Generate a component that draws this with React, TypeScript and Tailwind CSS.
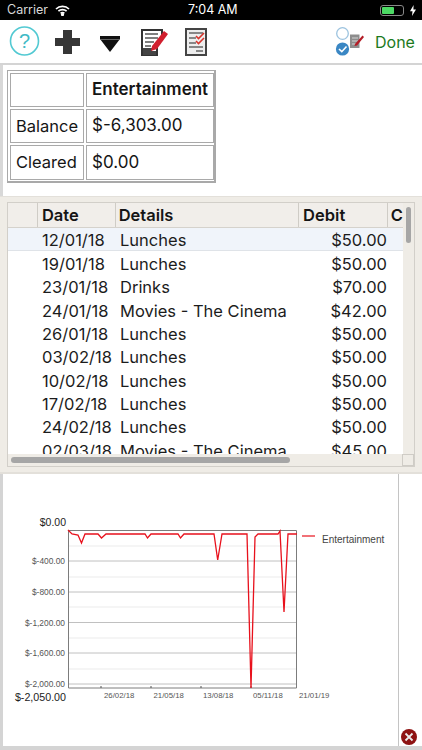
const rows = [
  ['12/01/18', 'Lunches', '$50.00'],
  ['19/01/18', 'Lunches', '$50.00'],
  ['23/01/18', 'Drinks', '$70.00'],
  ['24/01/18', 'Movies - The Cinema', '$42.00'],
  ['26/01/18', 'Lunches', '$50.00'],
  ['03/02/18', 'Lunches', '$50.00'],
  ['10/02/18', 'Lunches', '$50.00'],
  ['17/02/18', 'Lunches', '$50.00'],
  ['24/02/18', 'Lunches', '$50.00'],
  ['02/03/18', 'Movies - The Cinema', '$45.00'],
];

const linePoints =
  '68,530 72,534 78,535 81.5,543 85,534 98,534 101.5,538 106,534 145,534 147.5,538 151,534 178,534 180.5,538 184,534 214,534 217.7,560 222,534 247,534 251,688 255,537 258,534 278,534 280,531 284,612 288,534 297,534';

function StatusBar() {
  return (
    <div className="h-5 bg-black text-[#d8d8d8] flex items-center justify-between pl-[7px] pr-[6px] text-[12.5px] shrink-0 relative">
      <div className="flex items-center gap-[7px]">
        <span>Carrier</span>
        <svg width="15" height="11" viewBox="0 0 15 11" fill="none" stroke="white" strokeWidth="1.7">
          <path d="M1 4 C4.5 0.6 10.5 0.6 14 4" />
          <path d="M3.4 6.2 C5.6 4.2 9.4 4.2 11.6 6.2" />
          <path d="M5.6 8.4 C6.7 7.4 8.3 7.4 9.4 8.4" />
          <circle cx="7.5" cy="9.6" r="0.8" fill="white" />
        </svg>
      </div>
      <span className="absolute left-[188px] text-white">7:04 AM</span>
      <div className="flex items-center gap-[6px]">
        <div className="w-[24px] h-[11px] rounded-[3px] border border-[#888] p-[1px]">
          <div className="w-[12px] h-full bg-[#4cd964] rounded-[1px]" />
        </div>
        <svg width="6" height="11" viewBox="0 0 6 11" fill="white">
          <path d="M3.6 0 L0 6.2 H2.5 L2 11 L6 4.4 H3.4 Z" />
        </svg>
      </div>
    </div>
  );
}

function Toolbar() {
  return (
    <div className="h-[45px] bg-white border-b-2 border-[#d4d4d4] shrink-0">
      <svg width="422" height="43" viewBox="0 20 422 43">
        <circle cx="24.5" cy="41" r="14" fill="none" stroke="#52c9d2" strokeWidth="1.6" />
        <text x="24.5" y="48" textAnchor="middle" fontSize="20" fill="#3fbac6" fontFamily="Liberation Sans, sans-serif">?</text>
        <path d="M63 30 H72 V38 H80 V46 H72 V54 H63 V46 H55 V38 H63 Z" fill="#363636" />
        <path d="M100 36 H120 V39 L110 52 L100 39 Z" fill="#111" />
        <path d="M100 39.5 H120" stroke="#777" strokeWidth="0.8" />
        <g>
          <path d="M142 30 H162 V37 L157 45 V55 H142 Z" fill="#fff" stroke="#333" strokeWidth="2" />
          <path d="M145 34 H158 M145 38 H158 M145 42 H154 M145 46 H151" stroke="#555" strokeWidth="1.4" />
          <path d="M143 48 H152 V51 H156 V55 H143 Z" fill="#444" />
          <path d="M152 46 L164 31 L168 34 L157 49 L151 51 Z" fill="#d11f2e" />
        </g>
        <g>
          <path d="M186 29 H206 V55 H186 Z" fill="#eeeeee" stroke="#444" strokeWidth="2" />
          <path d="M189 33 H203 M189 38 H196 M189 43 H196 M189 47 H203 M196 51 H203" stroke="#666" strokeWidth="1.3" />
          <path d="M196 36 L198.5 38.5 L204 33 M196 41 L198.5 43.5 L204 38" fill="none" stroke="#d8342c" strokeWidth="1.6" />
        </g>
        <g>
          <circle cx="342.5" cy="33.5" r="5.8" fill="#fff" stroke="#9cc3df" strokeWidth="1.3" />
          <circle cx="342.5" cy="49" r="6.6" fill="#3a87c4" />
          <path d="M339 49 L341.8 51.7 L346.5 46.5" fill="none" stroke="#fff" strokeWidth="1.6" />
          <path d="M350 34.5 H359.5 V48 H350 Z" fill="#8d8d8d" />
          <path d="M352 38 H358 M352 41 H358 M352 44 H356" stroke="#ddd" strokeWidth="0.9" />
          <path d="M355 44 L362.5 35.5 L364 37 L357 45.5 L354.5 46 Z" fill="#b31c26" />
        </g>
        <text x="375" y="48" fontSize="16" fill="#1c7a1c" fontFamily="Inter, sans-serif">Done</text>
      </svg>
    </div>
  );
}

function SummaryTable() {
  const cell = 'border border-[#a9a9a9] bg-white flex items-center pl-[5px]';
  return (
    <div className="h-[131px] bg-white border-l-[3px] border-[#d8d8d8] pl-1 pt-[5px] shrink-0">
      <div className="w-[209px] h-[113px] border border-[#a9a9a9] border-r-2 border-b-2 pt-[2px] pl-[2px] grid grid-cols-[74px_128px] grid-rows-[34px_34px_35px] gap-[2px] text-[17px] text-[#151515]">
        <div className={cell} />
        <div className={`${cell} font-semibold`}>Entertainment</div>
        <div className={`${cell} text-[16.5px]`}>Balance</div>
        <div className={cell}>$-6,303.00</div>
        <div className={`${cell} text-[16.5px]`}>Cleared</div>
        <div className={cell}>$0.00</div>
      </div>
    </div>
  );
}

function LedgerGrid() {
  const head = 'bg-[#f1eeea] border-r border-[#cfccc6] flex items-center font-semibold h-full';
  return (
    <div className="h-[278px] bg-[#efece6] border-t border-b-2 border-[#e3e0da] pt-[5px] pl-[7px] shrink-0">
      <div className="w-[408px] h-[265px] border border-[#d2cfc9] flex flex-col">
        <div className="flex flex-1 min-h-0">
          <div className="w-[395px] flex flex-col overflow-hidden">
            <div className="h-[25px] shrink-0 flex text-[16.5px] text-[#151515] border-b border-[#d5d2cc]">
              <div className="w-[30px] bg-[#f1eeea] border-r border-[#cfccc6] h-full" />
              <div className={`${head} w-[78px] pl-[4px] pt-[1px]`}>Date</div>
              <div className={`${head} w-[184px] pl-[3px] pt-[1px]`}>Details</div>
              <div className={`${head} w-[89px] pl-[4px] pt-[1px]`}>Debit</div>
              <div className="flex-1 bg-[#f1eeea] flex items-center pl-[3px] pt-[1px] font-semibold">C</div>
            </div>
            <div className="bg-white flex-1 min-h-0 overflow-hidden text-[16.5px] text-[#1c1c1c]">
              {rows.map((r, i) => (
                <div
                  key={r[0]}
                  className={`h-[23.4px] pt-[2px] flex items-center ${i === 0 ? 'bg-[#f0f4fa] border-b border-[#dfe3e8]' : ''}`}
                >
                  <span className="w-[108px] pl-[34px] shrink-0">{r[0]}</span>
                  <span className="w-[184px] pl-[4px] shrink-0 whitespace-nowrap">{r[1]}</span>
                  <span className="w-[87px] text-right shrink-0">{r[2]}</span>
                </div>
              ))}
            </div>
          </div>
          <div className="flex-1 pl-[3px] pt-[4px]">
            <div className="w-[5px] h-[36px] rounded-full bg-[#a6a6a6]" />
          </div>
        </div>
        <div className="h-[12px] shrink-0 flex items-center pl-[3px] relative">
          <div className="w-[279px] h-[6px] rounded-full bg-[#a6a6a6]" />
          <div className="absolute right-0 top-0 w-[12px] h-[12px] border border-[#cfccc6]" />
        </div>
      </div>
    </div>
  );
}

function Chart() {
  const major = [561, 592, 622.5, 653, 684];
  const minor = [546, 577, 607, 638, 669];
  const yLabels: [string, number][] = [
    ['$-400.00', 561],
    ['$-800.00', 592],
    ['$-1,200.00', 622.5],
    ['$-1,600.00', 653],
    ['$-2,000.00', 684],
  ];
  const xLabels: [string, number][] = [
    ['26/02/18', 104],
    ['21/05/18', 153.5],
    ['13/08/18', 203],
    ['05/11/18', 253],
    ['21/01/19', 299],
  ];
  return (
    <svg width="395" height="272" viewBox="3 474 395 272" fontFamily="Liberation Sans, sans-serif">
      {minor.map((y) => (
        <line key={y} x1="68" x2="297" y1={y} y2={y} stroke="#ececec" strokeWidth="1.2" />
      ))}
      {major.map((y) => (
        <line key={y} x1="68" x2="297" y1={y} y2={y} stroke="#c0c0c0" />
      ))}
      <path d="M68.5 530.5 H296.5 V688 H68.5 Z" fill="none" stroke="#7c7c7c" />
      {[101, 151, 201, 251].map((x) => (
        <line key={x} x1={x} x2={x} y1="688" y2="686" stroke="#555" />
      ))}
      <polyline points={linePoints} fill="none" stroke="#e8111c" strokeWidth="1.3" />
      <text x="66" y="525.5" textAnchor="end" fontSize="10.5" fill="#222">$0.00</text>
      {yLabels.map(([t, y]) => (
        <text key={t} x="65" y={y + 3} textAnchor="end" fontSize="8.4" fill="#555">{t}</text>
      ))}
      <text x="66" y="700.5" textAnchor="end" fontSize="10.7" fill="#222">$-2,050.00</text>
      {xLabels.map(([t, x]) => (
        <text key={t} x={x} y="698" fontSize="7.8" fill="#555">{t}</text>
      ))}
      <line x1="302" x2="315" y1="536" y2="536" stroke="#e8111c" strokeWidth="1.2" />
      <text x="322" y="542.5" fontSize="10" fill="#444">Entertainment</text>
    </svg>
  );
}

export default function App() {
  return (
    <div className="w-[422px] h-[750px] flex flex-col overflow-hidden bg-[#dcdcdc] font-['Inter',sans-serif]">
      <StatusBar />
      <Toolbar />
      <SummaryTable />
      <LedgerGrid />
      <div className="flex-1 min-h-0 flex border-l-[3px] border-b-[4px] border-[#d4d4d4] bg-white">
        <div className="w-[395px] h-full">
          <Chart />
        </div>
        <div className="flex-1 border-l border-[#c4c4c4] flex items-end justify-end pr-[5px] pb-[1px]">
          <svg width="16" height="16" viewBox="0 0 16 16">
            <circle cx="8" cy="8" r="8" fill="#8e1212" />
            <path d="M4.5 4.5 L11.5 11.5 M11.5 4.5 L4.5 11.5" stroke="#ececec" strokeWidth="1.8" />
          </svg>
        </div>
      </div>
    </div>
  );
}
